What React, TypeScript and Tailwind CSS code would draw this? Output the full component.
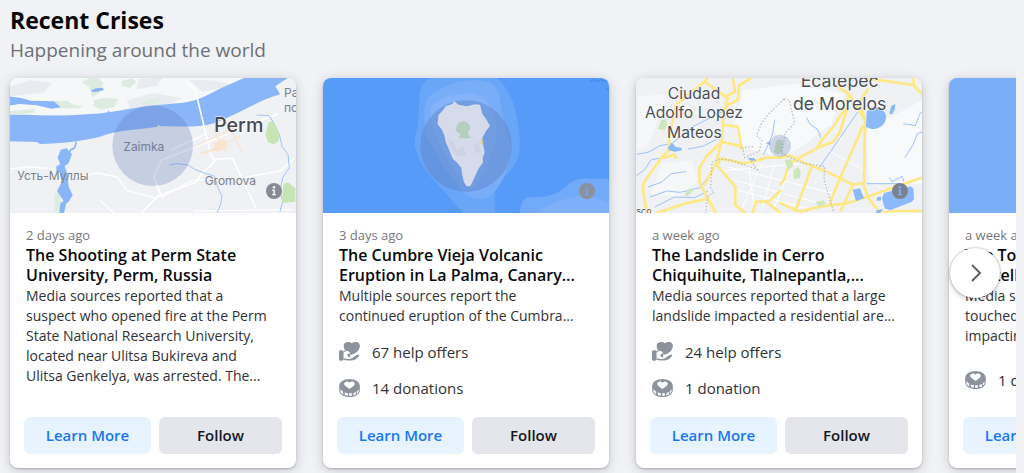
import type { ReactNode } from "react";

type Crisis = {
  id: string;
  when: string;
  title: string;
  summary: string;
  helpOffers?: string;
  donations?: string;
  map: ReactNode;
  info: "light" | "plain" | "dark";
};

function HandHeartIcon() {
  return (
    <svg viewBox="0 0 63 57" className="h-[19px] w-[21px] text-[#8c939d]" fill="currentColor" aria-hidden>
      <rect x="0" y="25" width="13" height="31" rx="4" />
      <path d="M13 28c4-3 9-4 14-3l8 9-2 10 10 6c-7 6-20 7-30 3Z" />
      <path d="M37 38 17 23C11 12 14 1 25 0c6-1 10 1 13 4 4-3 9-5 15-4 9 2 12 11 8 19-3 9-12 17-24 19Z" />
      <path d="M42 44c5-1 9-4 14-6 4-1 6 1 4 4-6 9-15 14-27 14Z" />
      <path
        d="M14 32c5-5 11-6 17-3 3 2 2 5-2 6-4 2-5 4-3 7 2 4 9 5 14 2 4-1 5 1 2 3-9 5-19 5-28 2Z"
        fill="white"
      />
    </svg>
  );
}

function CoinHeartIcon() {
  return (
    <svg viewBox="0 0 62 54" className="h-[18px] w-[21px] text-[#8c939d]" fill="currentColor" aria-hidden>
      <path d="M31 0c18 0 31 9 31 22v10c0 13-13 22-31 22S0 45 0 32V22C0 9 13 0 31 0Z" />
      <path d="M31 30 18 20c-5-5-3-11 3-12 4-1 8 1 10 4 2-3 6-5 10-4 6 1 8 7 3 12Z" fill="white" />
      <path
        d="M4 30c2 3 5 6 8 8v8c-5-3-8-6-8-11Zm13 10c3 2 6 2 9 3v7c-4 0-6-1-9-2Zm14 3h-1v7h8v-7Zm12-1c3-1 5-2 7-3v8l-7 2Zm10-5c2-2 4-4 5-6v5c0 3-2 6-5 8Z"
        fill="white"
      />
    </svg>
  );
}

function PermMap() {
  return (
    <svg viewBox="30 233 858 405" preserveAspectRatio="xMidYMid slice" className="size-full font-['Inter',sans-serif]">
      <rect x="0" y="200" width="930" height="460" fill="#eff1f5" />
      <path d="M28 232h735L640 300 430 322 325 340 28 345Z" fill="#f6f7f9" />
      <g fill="#e9ebf0">
        <path d="m28 260 60-20 70 8-30 30-100 10Zm390-25 70-3-20 25-60 10Zm150 5 70 0 60 15-90 20Z" />
        <path d="m380 300 80-22 90 16-60 22-100 8Z" />
      </g>
      <g fill="#dcece1">
        <path d="m245 245 25-12h25l15 15-12 30-22 12-8-30Zm120-3 30-8 15 10-20 18-25-6Z" />
        <path d="m282 300 35-8 38 4-12 24-38 8-24-10Zm-120 2 40 0 20 12 26 2-8 8-70 0Zm260 5 30-12 34 0-14 12-40 8Zm80 8 30-6 30 2-18 10-42 0ZM30 332l78-6-10 12-68 6Z" />
        <path d="m165 580 14-4 6 60h-22Z" />
      </g>
      <g fill="#8ab6f9">
        <path d="M28 344C90 342 150 348 215 345l90-6 18-3 2-6 4 6c90-18 140-22 220-29 50-8 70-22 110-42l75-33h130l-38 26 14 24c-80 24-134 66-204 88-53 14-105 6-156 8l-5-6-3 7c-72 10-130 12-172 30-60 14-115 20-180 22l-10-6-132-4Z" />
        <path d="m28 288 36 5 28 8 70 2 20 18-28 4-44-10-52-4-30 5Z" />
        <path d="m275 268 14-4 20-2 2 8-24 5-12-1Z" />
        <path d="m182 448 18-4 16 18-10 26-12 10 8 22 4 40 12 24-12 20-8 6-6 30h-14l3-32 10-6-20-30 14-26-6-30-10-4 0-14 12-6-8-20Z" />
      </g>
      <path d="M228 424c0 14-4 22-16 24l-4 10" fill="none" stroke="#8ab6f9" strokeWidth="5" />
      <g fill="none" stroke="#fff" strokeLinejoin="round">
        <path
          d="M560 242l26 28 46 190 12 24-38 34-18 28-112 40-62 62M644 476l54-2 70 150M484 480l-22 52 24 60M484 480l200-80 150-60"
          strokeWidth="5"
        />
        <path d="M470 594l-90-24-28-40-60-12-90 16M28 506l60-6 78 6M486 590l90-50 90-6M730 532l110-20 44-40M620 400l-110 50M580 632l300-4M300 600l40 38" strokeWidth="4" />
      </g>
      <g fill="none" stroke="#f8e3cf" strokeWidth="4">
        <path d="m580 440 110-50m-80 70 110-52m-82-24 40 70m0-90 48 90M600 460l90-26" />
      </g>
      <path d="m640 428 34-12 8 26-34 14Zm40-50 20-5 6 16-20 6Z" fill="#fbe3cd" />
      <g fill="none" stroke="#9dc3fa" strokeWidth="3">
        <path d="m508 494 22-4 34 4 22 14 34 12 24 8 8 30 14 30-4 24-12 28" />
        <path d="m770 344 36 2 12 16 20 40 8 36 18 24 4 40-20 30-8 40 8 30-8 32" />
      </g>
      <g fill="#c7e4b5">
        <path d="m806 366 14-4 8 16 10 20-2 24-16 10-16-6-8-24Z" />
        <path d="m850 552 14-6 22 18v40l-40 4Z" />
      </g>
      <g fill="#7c828c" fontSize="36">
        <text x="52" y="540">Усть-Муллы</text>
        <text x="370" y="453">Zaimka</text>
        <text x="614" y="555">Gromova</text>
        <text x="852" y="289">Pa</text>
        <text x="852" y="334">по</text>
      </g>
      <text x="642" y="396" fontSize="59" fontWeight="500" fill="#454a52" stroke="#fff" strokeWidth="3" paintOrder="stroke">
        Perm
      </text>
      <circle cx="458" cy="436" r="121" fill="#5a74b0" fillOpacity=".27" />
    </svg>
  );
}

function LaPalmaMap() {
  return (
    <svg viewBox="24 23 858 405" preserveAspectRatio="xMidYMid slice" className="size-full">
      <rect width="920" height="460" fill="#579bf8" />
      <path
        d="M345 23h200c38 32 56 80 62 130 12 60 10 105-14 138-22 32-52 48-54 78v60h-94L376 350c-30-30-68-72-76-125-2-30 10-50 10-70l4-86c4-26 14-38 31-46Z"
        fill="#69a6f8"
      />
      <path
        d="M336 84c36-30 80-54 142-54 46 0 66 12 74 44 8 56 22 106 36 156-6 80-34 122-66 150-30 12-56 6-76-14-40-44-86-112-114-174-4-44-8-80 4-108Z"
        fill="#78adf8"
      />
      <path d="M350 106c50-44 132-44 160-20 34 50 46 90 26 150-20 56-34 84-66 120-40-30-96-120-120-196-2-24-4-40 0-54Z" fill="#84b3fa" />
      <path d="M614 429c4-30 8-44 26-48 60 0 90-8 120-40 20-12 30-16 44-16h78v104Z" fill="#70aaf8" />
      <path d="M660 429c40-30 90-48 150-56l72 24v32Z" fill="#7db0f8" />
      <path d="m824 34 12-6 10 6 12-6 12 6 12-6M874 54l8 2" fill="none" stroke="#4284e0" strokeWidth="3" />
      <circle cx="453" cy="227" r="137" fill="#5d7fc0" fillOpacity=".43" />
      <path
        d="m370 135 14-15 8-12 20-7 6-8 12 10 25 5 25-6 15 1 7 27 11 16 12 20-12 16-11 20 2 18 5 26-6 18 1 12-14 20-12 26-8 18-5 8h-10l-8-12-6-26-2-18-14-16-11-10-7-16-8-20-7-15-4-20-8-18-12-15Z"
        fill="#d5dbeb"
      />
      <path d="m400 210 16 4 8 24 20-8 10 24-20 4-20-12Zm74 14 18-10 4 30-12 6Z" fill="#cdd3e3" />
      <path d="m499 205 5 8-2 10-5-4Z" fill="#e6cf62" />
      <path d="M434 156c14-6 26-2 32 14 0 10-6 12-8 18l10 16h-36l4-12-14-10c0-12 4-20 12-26Z" fill="#b4cfc0" />
    </svg>
  );
}

function MexicoMap() {
  return (
    <svg viewBox="24 23 858 405" preserveAspectRatio="xMidYMid slice" className="size-full font-['Inter',sans-serif]">
      <rect width="920" height="460" fill="#eff1f4" />
      <path d="M345 60 500 40l150 30-40 90-90 70-60 30-120-30-20-70Z" fill="#f8f9fa" />
      <path d="M716 180 882 90v250l-160 0Z" fill="#f8f9fa" />
      <path d="m28 80 90-10-60 160-30 10Zm72 200 90-10 20 60-60 50-80-10Z" fill="#f6f7f9" />
      <g fill="none" stroke="#fff" strokeWidth="3">
        <path d="m300 290 320 80M320 330l260 70M330 360l230 60M400 280l-60 140M440 280l-40 145M480 310l-44 110M290 300l230-20M360 270l20 155M150 90l60 40M130 200l80-30M600 240l110 60M580 120l60 90M740 340l90 60" />
      </g>
      <g fill="none" stroke="#9cc2f7" strokeWidth="3">
        <path d="m26 252 34-6 36-20 36-6 60-50 60-30 34-18M26 316l24-18 20-30 60-10M60 350l40-14 30-26 44-6M66 380l50-18 40 4 60-14 30-40 20-34" />
        <path d="m80 410 60-30 60 2 40-20M440 150l-6 40-14 34-14 30M536 142l10 20 24 16 8 24M690 124l-90 130-26 38M826 160l36 6 14-36 8-6M830 262l24-36 14-36 16-6M716 340h120l46-20M784 322l8 12 30-16 6 16M180 236l44-8 40-20" />
      </g>
      <g fill="none" stroke="#fde883" strokeWidth="8" strokeLinejoin="round">
        <g transform="translate(24 24)">
          <path d="m215 0-15 15-50 40-30 25-20 90-2 45-23 25-50 70-5 20 10 60 10 15M80 240l35-12 7 14M205 10l50 35 20 15-7 20M290 0l8 40-26 12" />
          <path d="m345 0-35 20-5 45-30 15-13 20-4 90-48 45-20 35v40l25 50 25 45M258 140l47 5 13 67-10-10-56-12M255 195l-15 60-35 65" />
          <path d="m330 405-32-25v-55l-56-65 13-20 65 15 30-5 40-12h45M60 405l90-30 62-13M350 405l10-35 40-2 35-33M390 370l45 35" />
        </g>
        <g transform="translate(456 24)">
          <path d="m0 238 30-6 35 18 75 30 78 38 32-3 12 40 38 50 40-7h95M255 125l-3 190M205 45l-5 50-20 65-20 30-50 20-70 38-20 27-5 25-15 20M195 90l-35 55-30 35-20 30" />
          <path d="m165 20 40 25 35 55 15 25-15-55 25-40M250 140l-70 160-25 60-5 20M95 265 45 400M220 318l-40 82M0 375l60 25 60-15 80-10 62-20 173-60M260 0l70 10 70 10 30 30M400 0l2 18" />
        </g>
      </g>
      <g fill="#8cb9f9">
        <path d="M716 124c20-26 52-16 58 14 2 22-20 40-42 38l-18-6Z" />
        <path d="m790 106 12-4-2 16-8 14-8-2ZM674 358l22-4 12 30-24 8ZM746 382l12-4 2 12-12 2ZM768 368l80-20 8 6 2 32-6 8-66 26-16-6-8-30ZM746 420l20-4-10 12h-12Z" />
        <path d="m120 230 12-12 12 12 16 2 2 8-22 4-18-4ZM360 262l20 2 4 8-20-2ZM412 218l12-4 4 10Z" />
      </g>
      <g fill="#cde7bd">
        <path d="m98 152 14-10 6 20-8 18-20-4ZM174 362l12-8 10 6-16 16-8 2ZM470 270l18-4 8 20-16 14ZM496 300l16-10 6 14-2 18-18 4ZM562 396l24-6 8 10-20 10Z" />
        <path d="M444 212l14-6 8 14-4 24-12 8-12-6Z" />
      </g>
      <g fill="none" stroke="#b6bac2" strokeWidth="4" strokeDasharray="4 6">
        <path d="m468 86 16 4 16 68-28 30-12 60 60 30 70 10-2 40 30 100M468 86l-46 44-22 30-14 36 16 14-8 32-44 20-6-30 34-4M364 264l24 34-76-28-40-4-20 10-4 80 10 10-18 12-8 50" />
      </g>
      <g fill="#4a4f57" fontSize="47" textAnchor="middle" stroke="#fff" strokeWidth="3" paintOrder="stroke">
        <text x="198" y="85">Ciudad</text>
        <text x="198" y="144">Adolfo Lopez</text>
        <text x="199" y="203">Mateos</text>
        <text x="635" y="51" fontSize="53">Ecatepec</text>
        <text x="635" y="118" fontSize="53">de Morelos</text>
        <text x="48" y="430" fontSize="27">sco</text>
      </g>
      <circle cx="456" cy="226" r="33" fill="#5a74b0" fillOpacity=".27" />
    </svg>
  );
}

const crises: Crisis[] = [
  {
    id: "perm",
    when: "2 days ago",
    title: "The Shooting at Perm State\nUniversity, Perm, Russia",
    summary:
      "Media sources reported that a\nsuspect who opened fire at the Perm\nState National Research University,\nlocated near Ulitsa Bukireva and\nUlitsa Genkelya, was arrested. The...",
    map: <PermMap />,
    info: "light",
  },
  {
    id: "la-palma",
    when: "3 days ago",
    title: "The Cumbre Vieja Volcanic\nEruption in La Palma, Canary...",
    summary: "Multiple sources report the\ncontinued eruption of the Cumbra...",
    helpOffers: "67 help offers",
    donations: "14 donations",
    map: <LaPalmaMap />,
    info: "plain",
  },
  {
    id: "chiquihuite",
    when: "a week ago",
    title: "The Landslide in Cerro\nChiquihuite, Tlalnepantla,...",
    summary: "Media sources reported that a large\nlandslide impacted a residential are...",
    helpOffers: "24 help offers",
    donations: "1 donation",
    map: <MexicoMap />,
    info: "dark",
  },
  {
    id: "tornado",
    when: "a week ago",
    title: "The Tornado in\nPantelleria, Italy",
    summary: "Media sources report a tornado\ntouched down in Pantelleria,\nimpacting the area...",
    donations: "1 donation",
    map: <div className="size-full bg-[#7aaef8]" />,
    info: "plain",
  },
];

const infoColors = {
  light: { disc: "#868b93", mark: "#f3f5f8" },
  plain: { disc: "#8b919b", mark: "#6ba6f5" },
  dark: { disc: "#7c828c", mark: "#7fb2f8" },
};

function InfoButton({ tone }: { tone: Crisis["info"] }) {
  const { disc, mark } = infoColors[tone];
  return (
    <button type="button" aria-label="Map information" className="absolute right-3.5 bottom-3.5">
      <svg viewBox="0 0 50 50" className="size-4">
        <circle cx="25" cy="25" r="25" fill={disc} />
        <circle cx="25" cy="13" r="4" fill={mark} />
        <path d="M19 20h9v14h3v4H19v-4h4V24h-4Z" fill={mark} />
      </svg>
    </button>
  );
}

function Stat({ icon, label }: { icon: ReactNode; label: string }) {
  return (
    <li className="flex h-9 items-center gap-3">
      {icon}
      <span>{label}</span>
    </li>
  );
}

function CrisisCard({ crisis }: { crisis: Crisis }) {
  return (
    <article className="flex h-[390px] w-[286px] shrink-0 flex-col overflow-hidden rounded-lg bg-white shadow-[0_1px_2px_rgba(0,0,0,0.2),0_2px_12px_rgba(0,0,0,0.18)]">
      <div className="relative h-[135px] shrink-0">
        {crisis.map}
        <InfoButton tone={crisis.info} />
      </div>
      <div className="flex flex-1 flex-col px-4 pt-3 text-[15px] leading-5 whitespace-pre text-[#303236]">
        <p className="text-[13px] leading-5 text-[#75777b]">{crisis.when}</p>
        <h3 className="text-base leading-5 font-semibold text-[#080a0d]">{crisis.title}</h3>
        <p className="mt-px text-sm leading-5">{crisis.summary}</p>
        <ul className="flex flex-1 flex-col justify-center pb-1">
          {crisis.helpOffers && <Stat icon={<HandHeartIcon />} label={crisis.helpOffers} />}
          {crisis.donations && <Stat icon={<CoinHeartIcon />} label={crisis.donations} />}
        </ul>
      </div>
      <div className="flex gap-2 px-3.5 pb-3.5 text-[15px] font-semibold">
        <button type="button" className="h-[37px] w-[127px] rounded-md bg-[#e7f3ff] text-[#1877f2]">
          Learn More
        </button>
        <button type="button" className="h-[37px] flex-1 rounded-md bg-[#e4e6eb] text-[#16181b]">
          Follow
        </button>
      </div>
    </article>
  );
}

export default function App() {
  return (
    <main className="min-h-screen overflow-hidden bg-[#f0f2f5] font-['Open_Sans',sans-serif]">
      <header className="px-2.5 pt-1">
        <h1 className="text-[23px] leading-8 font-bold text-[#050505]">Recent Crises</h1>
        <p className="text-[19px] leading-7 text-[#6d7075]">Happening around the world</p>
      </header>
      <section aria-label="Recent crises" className="relative mr-2">
        <div className="flex gap-[27px] overflow-hidden px-2.5 pt-3.5 pb-5">
          {crises.map((crisis) => (
            <CrisisCard key={crisis.id} crisis={crisis} />
          ))}
        </div>
        <button
          type="button"
          aria-label="Next"
          className="absolute top-46 right-4 flex size-[50px] items-center justify-center rounded-full bg-white shadow-[0_0_2px_rgba(0,0,0,0.35),0_2px_5px_rgba(0,0,0,0.2)]"
        >
          <svg viewBox="0 0 24 24" className="size-6" fill="none" stroke="#606368" strokeWidth="2">
            <path d="m9 4 8 8-8 8" />
          </svg>
        </button>
      </section>
    </main>
  );
}
